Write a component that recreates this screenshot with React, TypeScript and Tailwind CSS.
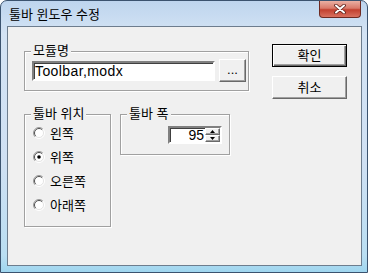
import React from 'react';

function Radio({ checked }: { checked?: boolean }) {
  return (
    <svg width="12" height="12" viewBox="0 0 12 12" className="shrink-0">
      <circle cx="6" cy="6" r="5" fill="#ffffff" />
      <path d="M2.1 9.9 A5.5 5.5 0 0 1 9.9 2.1" stroke="#9a9a9a" fill="none" strokeWidth="1" />
      <path d="M2.8 9.2 A4.5 4.5 0 0 1 9.2 2.8" stroke="#505050" fill="none" strokeWidth="1" />
      <path d="M9.9 2.1 A5.5 5.5 0 0 1 2.1 9.9" stroke="#ffffff" fill="none" strokeWidth="1" />
      <path d="M9.2 2.8 A4.5 4.5 0 0 1 2.8 9.2" stroke="#e3e3e3" fill="none" strokeWidth="1" />
      {checked && <circle cx="6" cy="6" r="1.8" fill="#000000" />}
    </svg>
  );
}

function Group({ label, className, children }: { label: string; className: string; children?: React.ReactNode }) {
  return (
    <fieldset className={`border border-[#a0a0a0] shadow-[1px_1px_0_#ffffff,inset_1px_1px_0_#ffffff] ${className}`}>
      <legend className="ml-[6px] px-[2px] leading-[14px] bg-[#f0f0f0]">{label}</legend>
      {children}
    </fieldset>
  );
}

const raised =
  'border border-t-[#ffffff] border-l-[#ffffff] border-r-[#696969] border-b-[#696969] shadow-[inset_-1px_-1px_0_#a0a0a0] bg-[#f0f0f0]';

export default function App() {
  const positions = [
    { label: '왼쪽', checked: false },
    { label: '위쪽', checked: true },
    { label: '오른쪽', checked: false },
    { label: '아래쪽', checked: false },
  ];

  return (
    <div className="w-[368px] h-[273px] flex flex-col rounded-t-[7px] border border-[#3b536f] bg-[linear-gradient(180deg,#bed5ee_0%,#d3e3f4_12%,#cfe0f3_60%,#b9def2_94%,#9fd6ef_100%)] text-[13px] text-black font-['Liberation_Sans','Noto_Sans_CJK_KR',sans-serif] overflow-hidden">
      {/* title bar */}
      <div className="h-[25px] flex items-start justify-between">
        <div className="pl-[8px] pt-[6px] leading-[15px]">툴바 윈도우 수정</div>
        <div className="mr-[6px] w-[42px] h-[17px] rounded-b-[4px] border border-t-0 border-[#6e2a22] bg-[linear-gradient(180deg,#eab0a3_0%,#d97a6a_45%,#c2402f_55%,#d8705f_100%)] flex items-center justify-center">
          <svg width="12" height="10" viewBox="0 0 12 10">
            <path d="M2 1.5 L10 8.5 M10 1.5 L2 8.5" stroke="#5a1f18" strokeWidth="3.6" strokeLinecap="round" />
            <path d="M2 1.5 L10 8.5 M10 1.5 L2 8.5" stroke="#ffffff" strokeWidth="2" strokeLinecap="round" />
          </svg>
        </div>
      </div>

      {/* client area */}
      <div className="ml-[6px] mr-[5px] mb-[6px] flex-1 border border-[#6d7d8e] bg-[#f0f0f0] flex pl-[16px] pt-[17px]">
        <div className="w-[225px] flex flex-col">
          <Group label="모듈명" className="w-[225px] h-[47px]">
            <div className="mt-[1px] h-[23px] flex items-center">
              <div className="ml-[7px] w-[183px] h-[20px] border-2 border-t-[#808080] border-l-[#808080] border-r-[#ffffff] border-b-[#ffffff] shadow-[inset_1px_1px_0_#404040] bg-white px-[1px] text-[14px] tracking-[0.4px] leading-[16px] flex items-center">
                Toolbar,modx
              </div>
              <div className={`ml-[4px] w-[27px] h-[23px] flex items-center justify-center leading-none pb-[2px] ${raised}`}>
                ...
              </div>
            </div>
          </Group>

          <div className="mt-[16px] flex items-start gap-[9px]">
            <Group label="툴바 위치" className="w-[87px] h-[120px]">
              <div className="flex flex-col pl-[8px]">
                {positions.map((p) => (
                  <div key={p.label} className="h-[24px] flex items-center gap-[5px]">
                    <Radio checked={p.checked} />
                    <span className="leading-[15px]">{p.label}</span>
                  </div>
                ))}
              </div>
            </Group>

            <Group label="툴바 폭" className="w-[110px] h-[48px]">
              <div className="mt-[5px] ml-[47px] w-[54px] h-[18px] flex border-2 border-t-[#808080] border-l-[#808080] border-r-[#ffffff] border-b-[#ffffff] shadow-[inset_1px_1px_0_#404040] bg-white">
                <div className="flex-1 text-right pr-[1px] text-[14px] leading-[14px]">95</div>
                <div className="w-[15px] flex flex-col">
                  <div className={`flex-1 flex items-center justify-center ${raised}`}>
                    <svg width="5" height="3" viewBox="0 0 5 3">
                      <path d="M2.5 0 L5 3 L0 3 Z" fill="#000000" />
                    </svg>
                  </div>
                  <div className={`flex-1 flex items-center justify-center ${raised}`}>
                    <svg width="5" height="3" viewBox="0 0 5 3">
                      <path d="M0 0 L5 0 L2.5 3 Z" fill="#000000" />
                    </svg>
                  </div>
                </div>
              </div>
            </Group>
          </div>
        </div>

        <div className="ml-[23px] flex flex-col gap-[9px]">
          <div className="w-[75px] h-[23px] border border-black bg-[#f0f0f0] shadow-[inset_1px_1px_0_#ffffff,inset_-1px_-1px_0_#696969,inset_-2px_-2px_0_#a0a0a0] flex items-center justify-center leading-none">
            확인
          </div>
          <div className={`w-[75px] h-[23px] flex items-center justify-center leading-none ${raised}`}>
            취소
          </div>
        </div>
      </div>
    </div>
  );
}
